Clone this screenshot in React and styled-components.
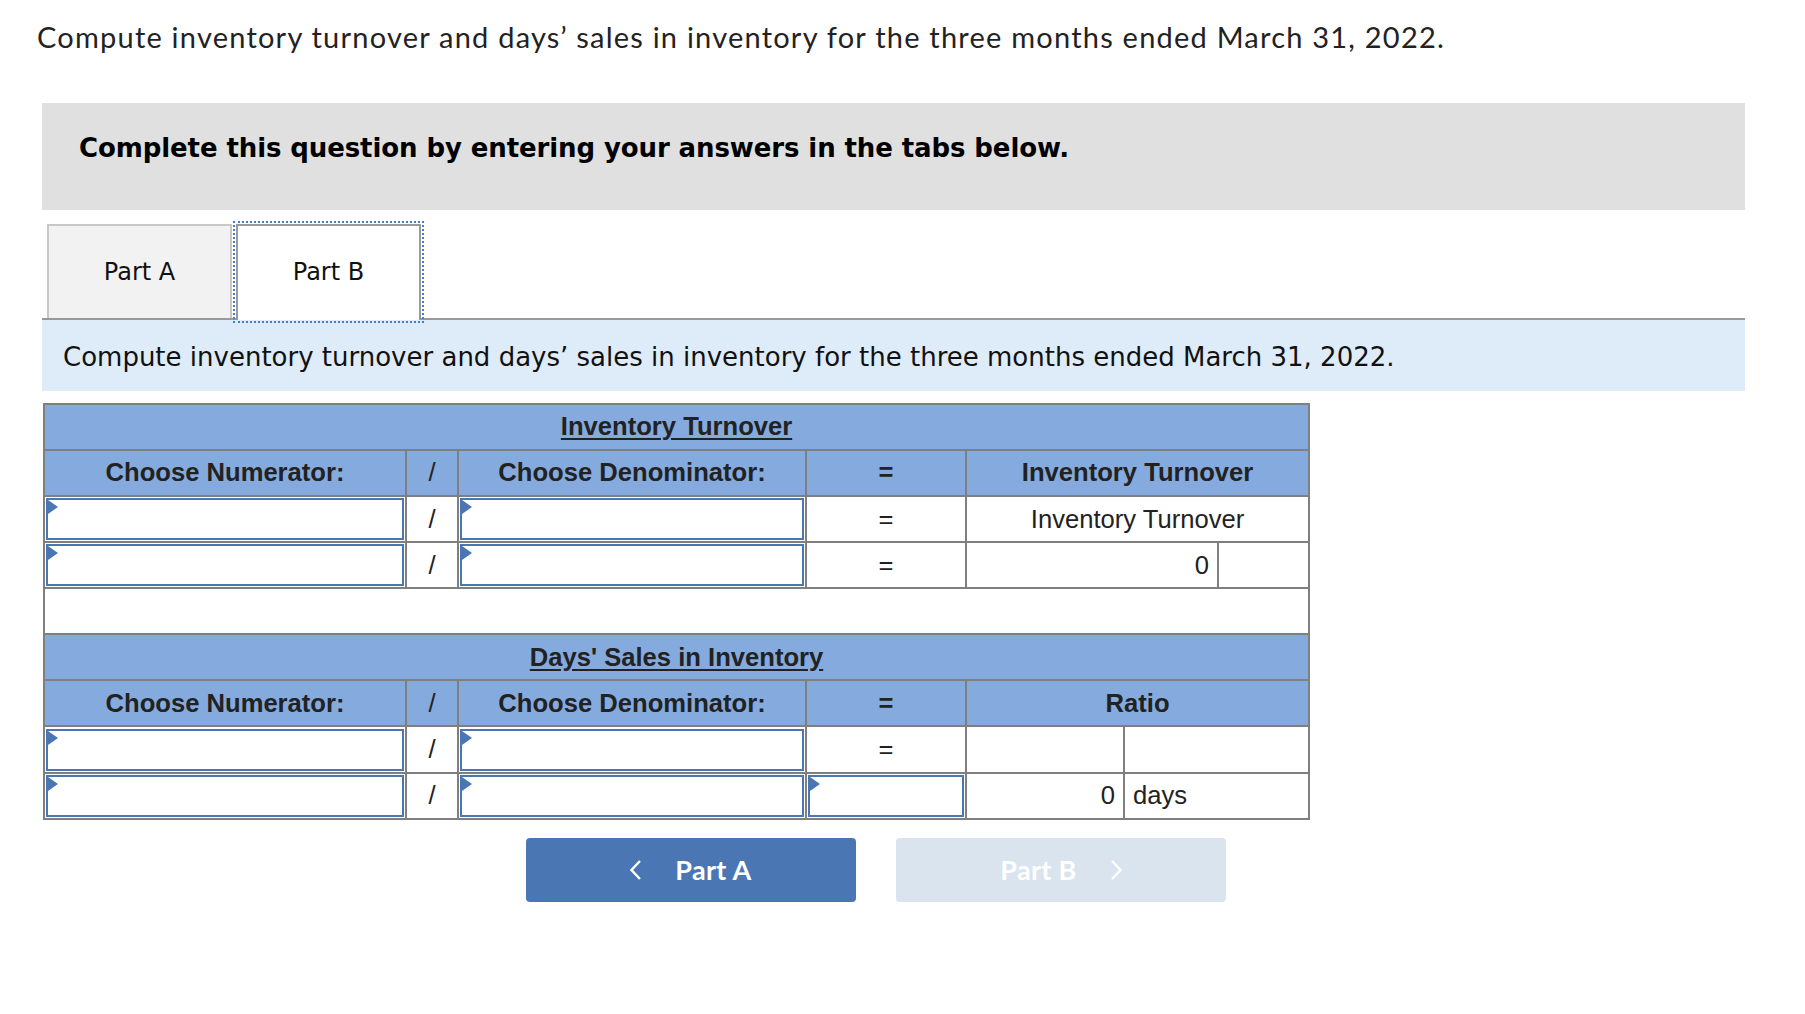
import styled, { createGlobalStyle } from "styled-components";

const GlobalStyle = createGlobalStyle`
  body {
    margin: 0;
    background: #fff;
  }
`;

const Page = styled.div`
  padding: 0 60px 60px 42px;
`;

const Prompt = styled.p`
  margin: 0 0 0 -5px;
  padding-top: 20px;
  font-family: Lato, "Liberation Sans", sans-serif;
  font-size: 29px;
  line-height: 1.2;
  letter-spacing: 1.22px;
  color: #222;
`;

const Instructions = styled.div`
  box-sizing: border-box;
  margin-top: 48px;
  height: 107px;
  padding: 30px 0 0 37px;
  background: #e0e0e0;
  font-family: "DejaVu Sans", Verdana, sans-serif;
  font-weight: bold;
  font-size: 26px;
  letter-spacing: -0.1px;
  color: #000;
`;

const TabStrip = styled.div`
  display: flex;
  align-items: flex-end;
  margin-top: 14px;
  padding-left: 5px;
  border-bottom: 2px solid #999;
`;

const Tab = styled.div`
  box-sizing: border-box;
  display: flex;
  align-items: center;
  justify-content: center;
  width: 185px;
  height: ${(p) => (p.$active ? "96px" : "94px")};
  margin-left: ${(p) => (p.$active ? "4px" : "0")};
  margin-bottom: ${(p) => (p.$active ? "-2px" : "0")};
  padding-bottom: ${(p) => (p.$active ? "2px" : "0")};
  border: 2px solid ${(p) => (p.$active ? "#9a9a9a" : "#c8c8c8")};
  border-bottom: none;
  background: ${(p) => (p.$active ? "#fff" : "#f2f2f2")};
  outline: ${(p) => (p.$active ? "2px dotted #4a7cc0" : "none")};
  outline-offset: 1px;
  font-family: "DejaVu Sans", Verdana, sans-serif;
  font-size: 24px;
  color: #111;
`;

const Band = styled.div`
  padding: 22px 21px 19px;
  background: #deebf8;
  font-family: "DejaVu Sans", Verdana, sans-serif;
  font-size: 26px;
  color: #111;
`;

const Grid = styled.table`
  margin: 12px 0 0 1px;
  width: 1265px;
  table-layout: fixed;
  border-collapse: collapse;
  border: 2px solid #7f7f7f;
  font-family: "Liberation Sans", Arial, sans-serif;
  font-size: 25.6px;
  color: #222;
`;

const Row = styled.tr`
  height: 46.1px;
  background: ${(p) => (p.$head ? "#84aade" : "#fff")};
`;

const Cell = styled.td`
  border: 2px solid #7f7f7f;
  padding: ${(p) => (p.$input ? "1px" : "0 8px")};
  text-align: ${(p) => p.$align || "center"};
  vertical-align: middle;
  font-weight: ${(p) => (p.$bold ? "bold" : "normal")};
  white-space: nowrap;
`;

const Caption = styled.span`
  font-weight: bold;
  text-decoration: underline;
  text-underline-offset: 3px;
`;

const InputBox = styled.div`
  position: relative;
  box-sizing: border-box;
  height: 42px;
  border: 2px solid #4a76b4;
  background: #fff;

  &::before {
    content: "";
    position: absolute;
    left: 0;
    top: 0;
    border-top: 7px solid transparent;
    border-bottom: 7px solid transparent;
    border-left: 10px solid #4a76b4;
  }
`;

const ButtonRow = styled.div`
  display: flex;
  gap: 40px;
  margin-top: 18px;
  padding-left: 484px;
`;

const NavButton = styled.button`
  display: flex;
  align-items: center;
  justify-content: center;
  gap: 34px;
  width: 330px;
  height: 64px;
  padding: 0;
  border: none;
  border-radius: 4px;
  background: ${(p) => (p.disabled ? "#dae4ef" : "#4a76b4")};
  color: #fff;
  font-family: Lato, "Liberation Sans", sans-serif;
  font-weight: bold;
  font-size: 27px;
  letter-spacing: 0.3px;
  cursor: ${(p) => (p.disabled ? "default" : "pointer")};
`;

function Chevron({ dir }) {
  const pts = dir === "left" ? "10,1 1.5,10 10,19" : "1,1 9.5,10 1,19";
  return (
    <svg width="11" height="20" viewBox="0 0 11 20">
      <polyline points={pts} fill="none" stroke="#fff" strokeWidth="2.4" />
    </svg>
  );
}

const question =
  "Compute inventory turnover and days\u2019 sales in inventory for the three months ended March 31, 2022.";

function App() {
  return (
    <Page>
      <GlobalStyle />
      <Prompt>{question}</Prompt>
      <Instructions>Complete this question by entering your answers in the tabs below.</Instructions>
      <TabStrip>
        <Tab>Part A</Tab>
        <Tab $active>Part B</Tab>
      </TabStrip>
      <Band>{question}</Band>

      <Grid>
        <colgroup>
          <col style={{ width: 362 }} />
          <col style={{ width: 52 }} />
          <col style={{ width: 348 }} />
          <col style={{ width: 160 }} />
          <col style={{ width: 158 }} />
          <col style={{ width: 94 }} />
          <col style={{ width: 91 }} />
        </colgroup>
        <tbody>
          <Row $head>
            <Cell colSpan={7}>
              <Caption>Inventory Turnover</Caption>
            </Cell>
          </Row>
          <Row $head>
            <Cell $bold>Choose Numerator:</Cell>
            <Cell>/</Cell>
            <Cell $bold>Choose Denominator:</Cell>
            <Cell $bold>=</Cell>
            <Cell $bold colSpan={3}>Inventory Turnover</Cell>
          </Row>
          <Row>
            <Cell $input><InputBox /></Cell>
            <Cell>/</Cell>
            <Cell $input><InputBox /></Cell>
            <Cell>=</Cell>
            <Cell colSpan={3}>Inventory Turnover</Cell>
          </Row>
          <Row>
            <Cell $input><InputBox /></Cell>
            <Cell>/</Cell>
            <Cell $input><InputBox /></Cell>
            <Cell>=</Cell>
            <Cell colSpan={2} $align="right">0</Cell>
            <Cell />
          </Row>
          <Row>
            <Cell colSpan={7} />
          </Row>

          <Row $head>
            <Cell colSpan={7}>
              <Caption>Days' Sales in Inventory</Caption>
            </Cell>
          </Row>
          <Row $head>
            <Cell $bold>Choose Numerator:</Cell>
            <Cell>/</Cell>
            <Cell $bold>Choose Denominator:</Cell>
            <Cell $bold>=</Cell>
            <Cell $bold colSpan={3}>Ratio</Cell>
          </Row>
          <Row>
            <Cell $input><InputBox /></Cell>
            <Cell>/</Cell>
            <Cell $input><InputBox /></Cell>
            <Cell>=</Cell>
            <Cell />
            <Cell colSpan={2} />
          </Row>
          <Row>
            <Cell $input><InputBox /></Cell>
            <Cell>/</Cell>
            <Cell $input><InputBox /></Cell>
            <Cell $input><InputBox /></Cell>
            <Cell $align="right">0</Cell>
            <Cell colSpan={2} $align="left">days</Cell>
          </Row>
        </tbody>
      </Grid>

      <ButtonRow>
        <NavButton>
          <Chevron dir="left" />
          <span>Part A</span>
        </NavButton>
        <NavButton disabled>
          <span>Part B</span>
          <Chevron dir="right" />
        </NavButton>
      </ButtonRow>
    </Page>
  );
}

export default App;
